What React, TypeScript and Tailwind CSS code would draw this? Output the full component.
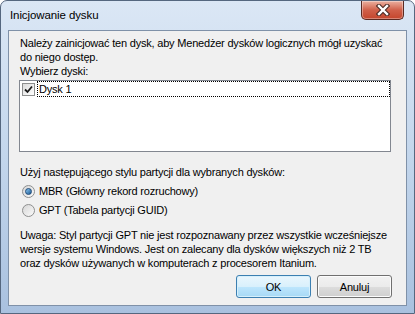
import React from 'react';

const FONT = { fontFamily: '"Liberation Sans", Arial, sans-serif' };

function CloseButton() {
  return (
    <div className="mr-[3px] flex h-[19px] w-[43px] items-center justify-center rounded-b-[5px] border border-t-0 border-[#5a2a22] bg-gradient-to-b from-[#eab0a0] via-[#d0604a] to-[#c4452c] shadow-[inset_0_0_0_1px_rgba(255,255,255,0.35)]">
      <svg width="14" height="12" viewBox="0 0 14 12">
        <path d="M3 2 L11 10 M11 2 L3 10" stroke="#4a2a24" strokeWidth="4.5" strokeLinecap="square" />
        <path d="M3 2 L11 10 M11 2 L3 10" stroke="#ffffff" strokeWidth="2.4" strokeLinecap="square" />
      </svg>
    </div>
  );
}

function Checkbox() {
  return (
    <div className="flex h-[13px] w-[13px] items-center justify-center border border-[#8e8f8f] bg-gradient-to-br from-[#dcdcdc] to-white">
      <svg width="9" height="9" viewBox="0 0 9 9">
        <path d="M1 4.5 L3.5 7 L8 1.5" fill="none" stroke="#1a1a1a" strokeWidth="1.8" />
      </svg>
    </div>
  );
}

function Radio({ checked }: { checked: boolean }) {
  return (
    <div className="flex h-[13px] w-[13px] items-center justify-center rounded-full border border-[#8e8f8f] bg-gradient-to-br from-[#d6d6d6] to-[#fbfbfb]">
      {checked && (
        <div className="h-[7px] w-[7px] rounded-full border border-[#1f4a78] bg-gradient-to-br from-[#8cc8f2] to-[#1a5b94]" />
      )}
    </div>
  );
}

function Button({ label, primary }: { label: string; primary?: boolean }) {
  return (
    <div
      className={`flex h-[23px] w-[75px] items-center justify-center rounded-[3px] border text-black ${
        primary
          ? 'border-[#3c7fb1] bg-[linear-gradient(to_bottom,#eaf6fd_0%,#d9f0fc_50%,#bee6fd_50%,#a7d9f5_100%)] shadow-[inset_0_0_0_1px_#d6f0fc]'
          : 'border-[#707070] bg-[linear-gradient(to_bottom,#f2f2f2_0%,#ebebeb_50%,#dddddd_50%,#cfcfcf_100%)] shadow-[inset_0_0_0_1px_#fcfcfc]'
      }`}
    >
      {label}
    </div>
  );
}

export default function App() {
  return (
    <div className="h-[314px] w-[415px] overflow-hidden bg-white" style={FONT}>
      <div className="flex h-full flex-col rounded-t-[7px] border border-[#55677f] bg-gradient-to-b from-[#dbe7f5] via-[#c3d6ec] to-[#a9c1df] px-[7px] pb-[7px]">
        <div className="flex h-[29px] shrink-0 items-start justify-between">
          <span className="pl-[2px] pt-[6px] text-[11.5px] tracking-[-0.1px] text-black">Inicjowanie dysku</span>
          <CloseButton />
        </div>
        <div className="flex min-h-0 flex-1 flex-col whitespace-nowrap border border-[#7f91a8] bg-[#f0f0f0] pl-[10px] pr-[14px] text-[11px] leading-[14px] tracking-[-0.2px] text-black">
          <p className="mt-[5px] pl-[1px]">
            Należy zainicjować ten dysk, aby Menedżer dysków logicznych mógł uzyskać
            <br />
            do niego dostęp.
          </p>
          <p className="pl-[1px]">Wybierz dyski:</p>
          <div className="mt-[2px] h-[72px] w-[372px] shrink-0 border border-[#828790] bg-white">
            <div className="flex h-[16px] items-center">
              <div className="ml-[2px]">
                <Checkbox />
              </div>
              <div className="ml-[2px] flex h-[16px] flex-1 items-center border border-dotted border-black pl-[1px]">
                Dysk 1
              </div>
            </div>
          </div>
          <p className="mt-[13px] pl-[1px]">Użyj następującego stylu partycji dla wybranych dysków:</p>
          <div className="mt-[5px] flex flex-col gap-[5px] pl-[3px]">
            <label className="flex items-center gap-[4px]">
              <Radio checked />
              <span>MBR (Główny rekord rozruchowy)</span>
            </label>
            <label className="flex items-center gap-[4px]">
              <Radio checked={false} />
              <span>GPT (Tabela partycji GUID)</span>
            </label>
          </div>
          <p className="mt-[11px] pl-[1px]">
            Uwaga: Styl partycji GPT nie jest rozpoznawany przez wszystkie wcześniejsze
            <br />
            wersje systemu Windows. Jest on zalecany dla dysków większych niż 2 TB
            <br />
            oraz dysków używanych w komputerach z procesorem Itanium.
          </p>
          <div className="mt-[5px] flex justify-end gap-[6px]">
            <Button label="OK" primary />
            <Button label="Anuluj" />
          </div>
        </div>
      </div>
    </div>
  );
}
